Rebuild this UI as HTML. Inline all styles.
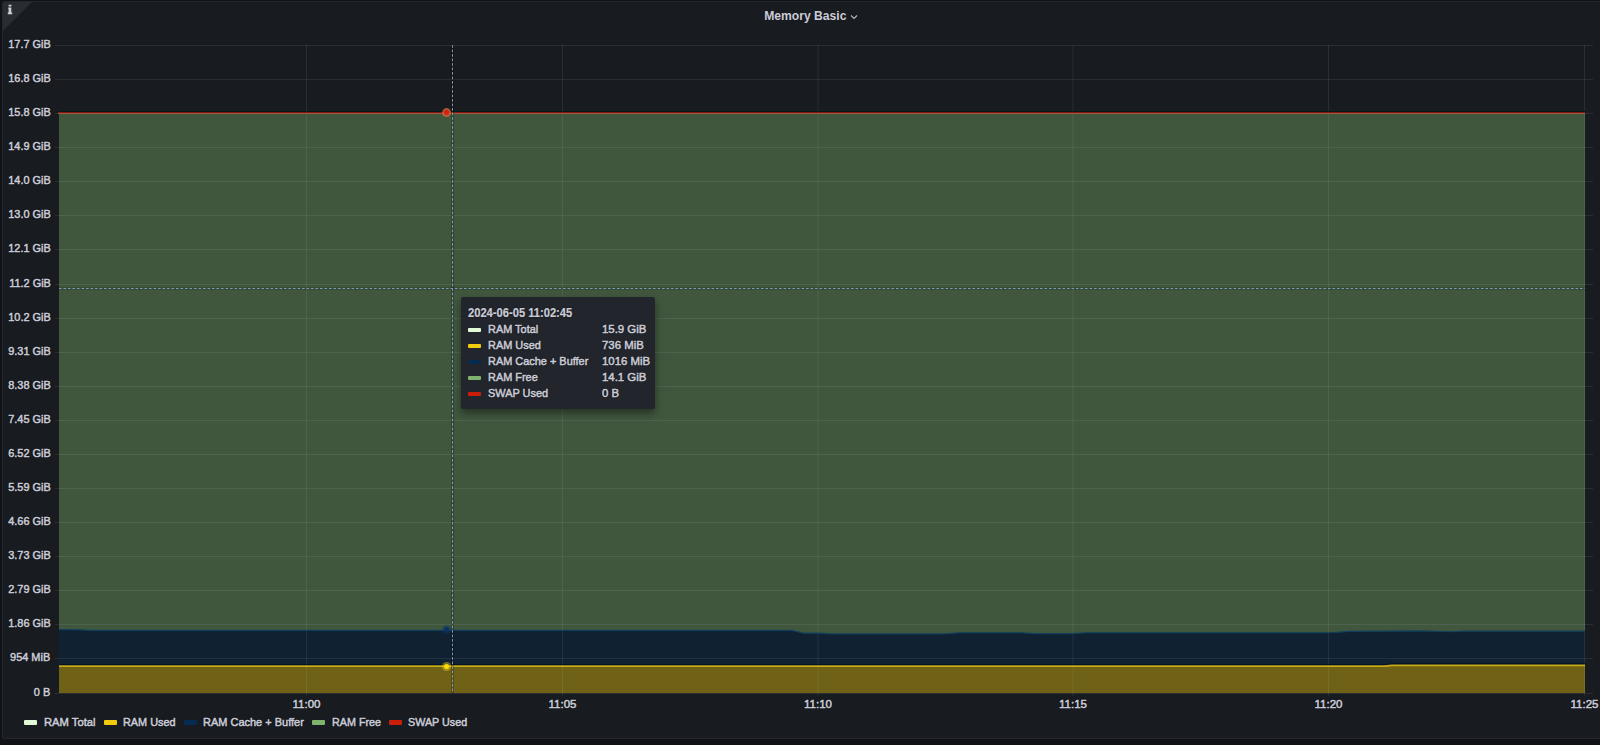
<!DOCTYPE html>
<html><head><meta charset="utf-8"><style>
html,body{margin:0;padding:0;}
body{width:1600px;height:745px;overflow:hidden;background:#111217;position:relative;font-family:"Liberation Sans",sans-serif;color:#cbccd8;}
.panel{position:absolute;left:2px;top:1px;width:1620px;height:736px;background:#181b1f;border:1px solid #24272b;border-radius:2px;}
.corner{position:absolute;left:3px;top:2px;width:0;height:0;border-top:29px solid #292c33;border-right:29px solid transparent;border-top-left-radius:2px;}
.info{position:absolute;left:7.5px;top:3px;font:bold 14px/13px "Liberation Serif",serif;color:#d8d8e0;}
.title{position:absolute;left:0;width:1620px;text-align:center;font-size:13px;line-height:13px;font-weight:bold;transform:scaleX(0.934);}
svg{position:absolute;left:0;top:0;}
.tx{position:absolute;white-space:nowrap;font-size:11.5px;line-height:12px;-webkit-text-stroke:0.5px currentColor;text-shadow:0 0 1.5px rgba(0,0,0,0.85);}
.yl{right:1549.5px;text-align:right;transform:scaleX(0.95);transform-origin:100% 0;}
.xl{width:80px;text-align:center;transform:scaleX(1.0);}
.lt{transform:scaleX(0.935);transform-origin:0 0;}
.tt{transform:scaleX(0.95);transform-origin:0 0;}
.tv{transform:scaleX(0.99);transform-origin:0 0;}
.sw{position:absolute;width:13px;height:5px;border-radius:1px;}
.tip{position:absolute;left:461px;top:297px;width:194px;height:112px;background:#22252b;border-radius:2px;box-shadow:0 4px 9px rgba(0,0,0,0.45);}
.th{position:absolute;white-space:nowrap;font-size:12px;line-height:12px;font-weight:bold;transform:scaleX(0.93);transform-origin:0 0;-webkit-text-stroke:0.2px currentColor;text-shadow:0 0 1.5px rgba(0,0,0,0.8);}
.tsw{position:absolute;left:468px;width:13px;height:4px;border-radius:1px;}
</style></head><body>
<div class="panel"></div>
<div class="corner"></div>
<div class="title" style="top:9px;text-indent:-10px">Memory Basic</div>
<svg width="1600" height="745" viewBox="0 0 1600 745">
<path d="M59,666.2 L1384,666.2 L1392,665.3 L1585,665.3 L1585,693 L59,693 Z" fill="rgba(242,204,12,0.4)"/>
<path d="M59,629.55 L76,629.55 L90,630.45 L791.6,630.45 L804,633.15 L818,633.15 L831,633.95 L945,633.95 L959,632.75 L1021,632.75 L1035,633.65 L1072,633.65 L1086,632.75 L1330,632.75 L1350,631.45 L1422,630.95 L1449,631.75 L1465,631.15 L1585,631.15 L1585,665.3 L1392,665.3 L1384,666.2 L59,666.2 Z" fill="rgba(5,43,81,0.4)"/>
<path d="M59,113.5 L1585,113.5 L1585,631.15 L1465,631.15 L1449,631.75 L1422,630.95 L1350,631.45 L1330,632.75 L1086,632.75 L1072,633.65 L1035,633.65 L1021,632.75 L959,632.75 L945,633.95 L831,633.95 L818,633.15 L804,633.15 L791.6,630.45 L90,630.45 L76,629.55 L59,629.55 Z" fill="rgba(126,178,109,0.4)"/>
<path d="M55,45.5 H1593 M55,79.5 H1593 M55,113.5 H1593 M55,147.5 H1593 M55,181.5 H1593 M55,215.5 H1593 M55,249.5 H1593 M55,284.5 H1593 M55,318.5 H1593 M55,352.5 H1593 M55,386.5 H1593 M55,420.5 H1593 M55,454.5 H1593 M55,488.5 H1593 M55,522.5 H1593 M55,556.5 H1593 M55,590.5 H1593 M55,624.5 H1593 M55,658.5 H1593 M55,693.5 H1593 M306.5,45 V696 M562.5,45 V696 M818,45 V696 M1073,45 V696 M1328.5,45 V696 M1584.5,45 V696" stroke="rgba(204,204,220,0.1)" stroke-width="1" fill="none"/>
<polyline points="59,664.6 1384,664.6 1392,663.7 1585,663.7" stroke="#050d24" stroke-width="1" fill="none" opacity="0.8"/>
<polyline points="59,666.2 1384,666.2 1392,665.3 1585,665.3" stroke="#F2CC0C" stroke-width="1.8" fill="none" opacity="0.75"/>
<polyline points="59,629.55 76,629.55 90,630.45 791.6,630.45 804,633.15 818,633.15 831,633.95 945,633.95 959,632.75 1021,632.75 1035,633.65 1072,633.65 1086,632.75 1330,632.75 1350,631.45 1422,630.95 1449,631.75 1465,631.15 1585,631.15" stroke="#10405f" stroke-width="1.2" fill="none"/>
<polyline points="851,15.5 854,18.5 857,15.5" stroke="#b4b4c0" stroke-width="1.2" fill="none"/>
<path d="M8.6,4.8 H11.4 V6.6 H8.6 Z M8.3,7.4 H11.3 V12.6 H12.2 V14.2 H7.8 V12.6 H8.6 V9 H8.3 Z" fill="#cfcfd8"/>
<path d="M58,111.5 H1585" stroke="#07181c" stroke-width="1"/>
<path d="M58,112.5 H1585" stroke="#8a1414" stroke-width="1"/>
<path d="M58,113.5 H1585" stroke="#9c5a3c" stroke-width="1"/>
<path d="M452.5,45 V693" stroke="#000" stroke-opacity="0.2" stroke-width="3"/>
<path d="M59,288.5 H1585" stroke="#000" stroke-opacity="0.15" stroke-width="3"/>
<path d="M452.5,45 V693" stroke="#7a9bb3" stroke-width="1" stroke-dasharray="2.8 1.7"/>
<path d="M59,288.5 H1585" stroke="#7a9bb3" stroke-width="1" stroke-dasharray="2.6 1.9"/>
<circle cx="446.6" cy="112.6" r="4.5" fill="#d86a3c" fill-opacity="0.75"/>
<circle cx="446.6" cy="112.6" r="2.5" fill="#d4200c"/>
<circle cx="446.6" cy="629.4" r="4.5" fill="#0b3a6a" fill-opacity="0.45"/>
<circle cx="446.6" cy="629.4" r="2.5" fill="#0a3262"/>
<circle cx="446.6" cy="666.5" r="4.5" fill="#f2cc10" fill-opacity="0.45"/>
<circle cx="446.6" cy="666.5" r="2.5" fill="#f8dc10"/>
</svg>
<div class="tx yl" style="top:38.32px">17.7 GiB</div>
<div class="tx yl" style="top:72.32px">16.8 GiB</div>
<div class="tx yl" style="top:106.32px">15.8 GiB</div>
<div class="tx yl" style="top:140.32px">14.9 GiB</div>
<div class="tx yl" style="top:174.32px">14.0 GiB</div>
<div class="tx yl" style="top:208.32px">13.0 GiB</div>
<div class="tx yl" style="top:242.32px">12.1 GiB</div>
<div class="tx yl" style="top:277.32px">11.2 GiB</div>
<div class="tx yl" style="top:311.32px">10.2 GiB</div>
<div class="tx yl" style="top:345.32px">9.31 GiB</div>
<div class="tx yl" style="top:379.32px">8.38 GiB</div>
<div class="tx yl" style="top:413.32px">7.45 GiB</div>
<div class="tx yl" style="top:447.32px">6.52 GiB</div>
<div class="tx yl" style="top:481.32px">5.59 GiB</div>
<div class="tx yl" style="top:515.32px">4.66 GiB</div>
<div class="tx yl" style="top:549.32px">3.73 GiB</div>
<div class="tx yl" style="top:583.32px">2.79 GiB</div>
<div class="tx yl" style="top:617.32px">1.86 GiB</div>
<div class="tx yl" style="top:651.32px">954 MiB</div>
<div class="tx yl" style="top:686.32px">0 B</div>
<div class="tx xl" style="left:266.5px;top:698.02px">11:00</div>
<div class="tx xl" style="left:522.5px;top:698.02px">11:05</div>
<div class="tx xl" style="left:778px;top:698.02px">11:10</div>
<div class="tx xl" style="left:1033px;top:698.02px">11:15</div>
<div class="tx xl" style="left:1288.5px;top:698.02px">11:20</div>
<div class="tx xl" style="left:1544.5px;top:698.02px">11:25</div>
<i class="sw" style="left:23.8px;top:720px;background:#E0F9D7"></i>
<div class="tx lt" style="left:43.7px;top:716.02px;transform:scaleX(0.975)">RAM Total</div>
<i class="sw" style="left:104.2px;top:720px;background:#F2CC0C"></i>
<div class="tx lt" style="left:122.9px;top:716.02px;transform:scaleX(0.945)">RAM Used</div>
<i class="sw" style="left:184.4px;top:720px;background:#052B51"></i>
<div class="tx lt" style="left:202.7px;top:716.02px;transform:scaleX(0.955)">RAM Cache + Buffer</div>
<i class="sw" style="left:312.1px;top:720px;background:#7EB26D"></i>
<div class="tx lt" style="left:331.7px;top:716.02px;transform:scaleX(0.935)">RAM Free</div>
<i class="sw" style="left:388.9px;top:720px;background:#c81e0a"></i>
<div class="tx lt" style="left:407.9px;top:716.02px;transform:scaleX(0.935)">SWAP Used</div>
<div class="tip"></div>
<div class="th" style="left:468px;top:307.04px">2024-06-05 11:02:45</div>
<i class="tsw" style="top:327.8px;background:#E0F9D7"></i>
<div class="tx tt" style="left:488px;top:322.72px">RAM Total</div>
<div class="tx tv" style="left:601.5px;top:322.72px">15.9 GiB</div>
<i class="tsw" style="top:343.8px;background:#F2CC0C"></i>
<div class="tx tt" style="left:488px;top:338.72px">RAM Used</div>
<div class="tx tv" style="left:601.5px;top:338.72px">736 MiB</div>
<i class="tsw" style="top:359.8px;background:#052B51"></i>
<div class="tx tt" style="left:488px;top:354.72px">RAM Cache + Buffer</div>
<div class="tx tv" style="left:601.5px;top:354.72px">1016 MiB</div>
<i class="tsw" style="top:375.8px;background:#7EB26D"></i>
<div class="tx tt" style="left:488px;top:370.72px">RAM Free</div>
<div class="tx tv" style="left:601.5px;top:370.72px">14.1 GiB</div>
<i class="tsw" style="top:391.8px;background:#c81e0a"></i>
<div class="tx tt" style="left:488px;top:386.72px">SWAP Used</div>
<div class="tx tv" style="left:601.5px;top:386.72px">0 B</div>
</body></html>
